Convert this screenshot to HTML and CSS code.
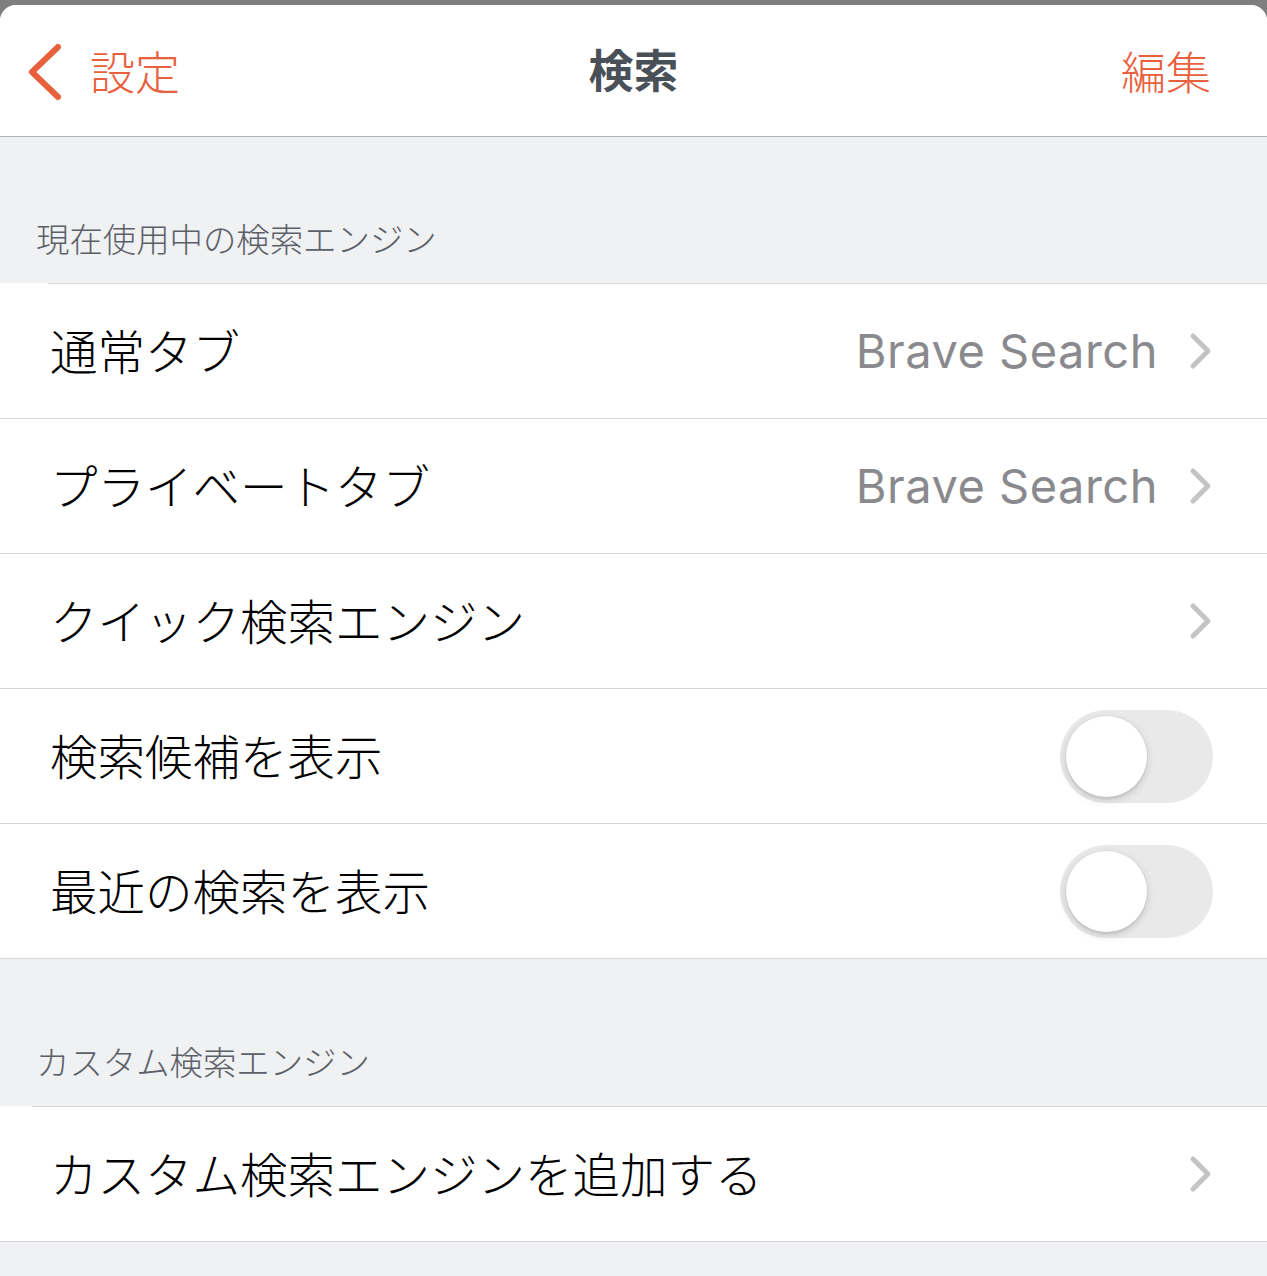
FILE: index.html
```html
<!DOCTYPE html>
<html lang="ja">
<head>
<meta charset="utf-8">
<title>検索</title>
<link rel="stylesheet" href="styles.css">
</head>
<body>
<div class="sheet">
  <header class="nav">
    <div class="nav-left">
      <svg class="back-icon" width="36" height="58" viewBox="0 0 36 58" aria-hidden="true">
        <path d="M31 4 L5 29 L31 54" fill="none" stroke="#e9603d" stroke-width="6" stroke-linecap="round" stroke-linejoin="round"/>
      </svg>
      <span class="nav-link">設定</span>
    </div>
    <h1 class="nav-title">検索</h1>
    <div class="nav-right"><span class="nav-link">編集</span></div>
  </header>

  <div class="section-header first"><span>現在使用中の検索エンジン</span></div>
  <div class="group inset-48">
    <div class="row">
      <span class="row-label">通常タブ</span>
      <div class="row-accessory">
        <span class="row-value">Brave Search</span>
        <svg class="chevron" width="24" height="38" viewBox="0 0 24 38" aria-hidden="true"><path d="M4 4 L19 19 L4 34" fill="none" stroke="#c4c4c7" stroke-width="5" stroke-linecap="round" stroke-linejoin="round"/></svg>
      </div>
    </div>
    <div class="row">
      <span class="row-label">プライベートタブ</span>
      <div class="row-accessory">
        <span class="row-value">Brave Search</span>
        <svg class="chevron" width="24" height="38" viewBox="0 0 24 38" aria-hidden="true"><path d="M4 4 L19 19 L4 34" fill="none" stroke="#c4c4c7" stroke-width="5" stroke-linecap="round" stroke-linejoin="round"/></svg>
      </div>
    </div>
    <div class="row">
      <span class="row-label">クイック検索エンジン</span>
      <div class="row-accessory">
        <svg class="chevron" width="24" height="38" viewBox="0 0 24 38" aria-hidden="true"><path d="M4 4 L19 19 L4 34" fill="none" stroke="#c4c4c7" stroke-width="5" stroke-linecap="round" stroke-linejoin="round"/></svg>
      </div>
    </div>
    <div class="row">
      <span class="row-label">検索候補を表示</span>
      <div class="toggle"><div class="knob"></div></div>
    </div>
    <div class="row">
      <span class="row-label">最近の検索を表示</span>
      <div class="toggle"><div class="knob"></div></div>
    </div>
  </div>

  <div class="section-header second"><span>カスタム検索エンジン</span></div>
  <div class="group inset-32">
    <div class="row">
      <span class="row-label">カスタム検索エンジンを追加する</span>
      <div class="row-accessory">
        <svg class="chevron" width="24" height="38" viewBox="0 0 24 38" aria-hidden="true"><path d="M4 4 L19 19 L4 34" fill="none" stroke="#c4c4c7" stroke-width="5" stroke-linecap="round" stroke-linejoin="round"/></svg>
      </div>
    </div>
  </div>
  <div class="footer-space"></div>
</div>
</body>
</html>
```

FILE: styles.css
```css
* {
  box-sizing: border-box;
}

html, body {
  margin: 0;
  padding: 0;
}

body {
  background: #7f7f7f;
  font-family: "Noto Sans CJK JP", "Noto Sans", sans-serif;
  height: 1276px;
  overflow: hidden;
}

.sheet {
  margin-top: 5px;
  background: #f0f1f3;
  border-radius: 16px 16px 0 0;
  overflow: hidden;
  min-height: 1271px;
}

/* Navigation bar */
.nav {
  height: 132px;
  background: #ffffff;
  border-bottom: 1px solid #b3b3b3;
  display: grid;
  grid-template-columns: 1fr auto 1fr;
  align-items: center;
}

.nav-left {
  display: flex;
  align-items: center;
  padding-left: 27px;
  gap: 27px;
}

.back-icon {
  display: block;
  margin-top: 2px;
}

.nav-link {
  color: #e9603d;
  font-size: 45px;
  line-height: 1;
  font-weight: 300;
}

.nav-title {
  margin: 0;
  font-size: 45px;
  line-height: 1;
  font-weight: 700;
  color: #495057;
  margin-top: -4px;
}

.nav-right {
  display: flex;
  justify-content: flex-end;
  padding-right: 56px;
}

/* Section headers */
.section-header {
  display: flex;
  align-items: flex-end;
  padding-left: 36px;
  padding-bottom: 25px;
  color: #5b6068;
  font-size: 33.4px;
  line-height: 40px;
  font-weight: 300;
}

.section-header.first {
  height: 146px;
}

.section-header.second {
  height: 147px;
}

/* Groups and rows */
.group {
  background: #ffffff;
  position: relative;
  border-top: 1px solid transparent;
}

.group::before {
  content: "";
  position: absolute;
  top: -1px;
  right: 0;
  height: 1px;
  background: #d8d8db;
}

.group.inset-48::before {
  left: 48px;
}

.group.inset-32::before {
  left: 32px;
}

.row {
  height: 135px;
  display: flex;
  align-items: center;
  justify-content: space-between;
  padding-left: 50px;
  padding-right: 54px;
  border-bottom: 1px solid #d8d8db;
}

.row-label {
  font-size: 47.5px;
  line-height: 1;
  color: #000000;
  font-weight: 300;
  margin-top: -2px;
}

.row-accessory {
  display: flex;
  align-items: center;
  gap: 31px;
}

.row-value {
  font-family: "Inter", "Liberation Sans", sans-serif;
  font-size: 47px;
  line-height: 1;
  color: #8a8a8e;
  letter-spacing: 0.5px;
  margin-top: -2px;
}

.chevron {
  display: block;
}

/* Toggle */
.toggle {
  width: 153px;
  height: 93px;
  border-radius: 47px;
  background: #e9e9ea;
  display: flex;
  align-items: center;
  padding-left: 6px;
}

.knob {
  width: 81px;
  height: 81px;
  border-radius: 50%;
  background: #ffffff;
  box-shadow: 0 3px 8px rgba(0, 0, 0, 0.15), 0 3px 1px rgba(0, 0, 0, 0.04), 0 0 0 1px rgba(0, 0, 0, 0.03);
}

.footer-space {
  height: 40px;
}
```
